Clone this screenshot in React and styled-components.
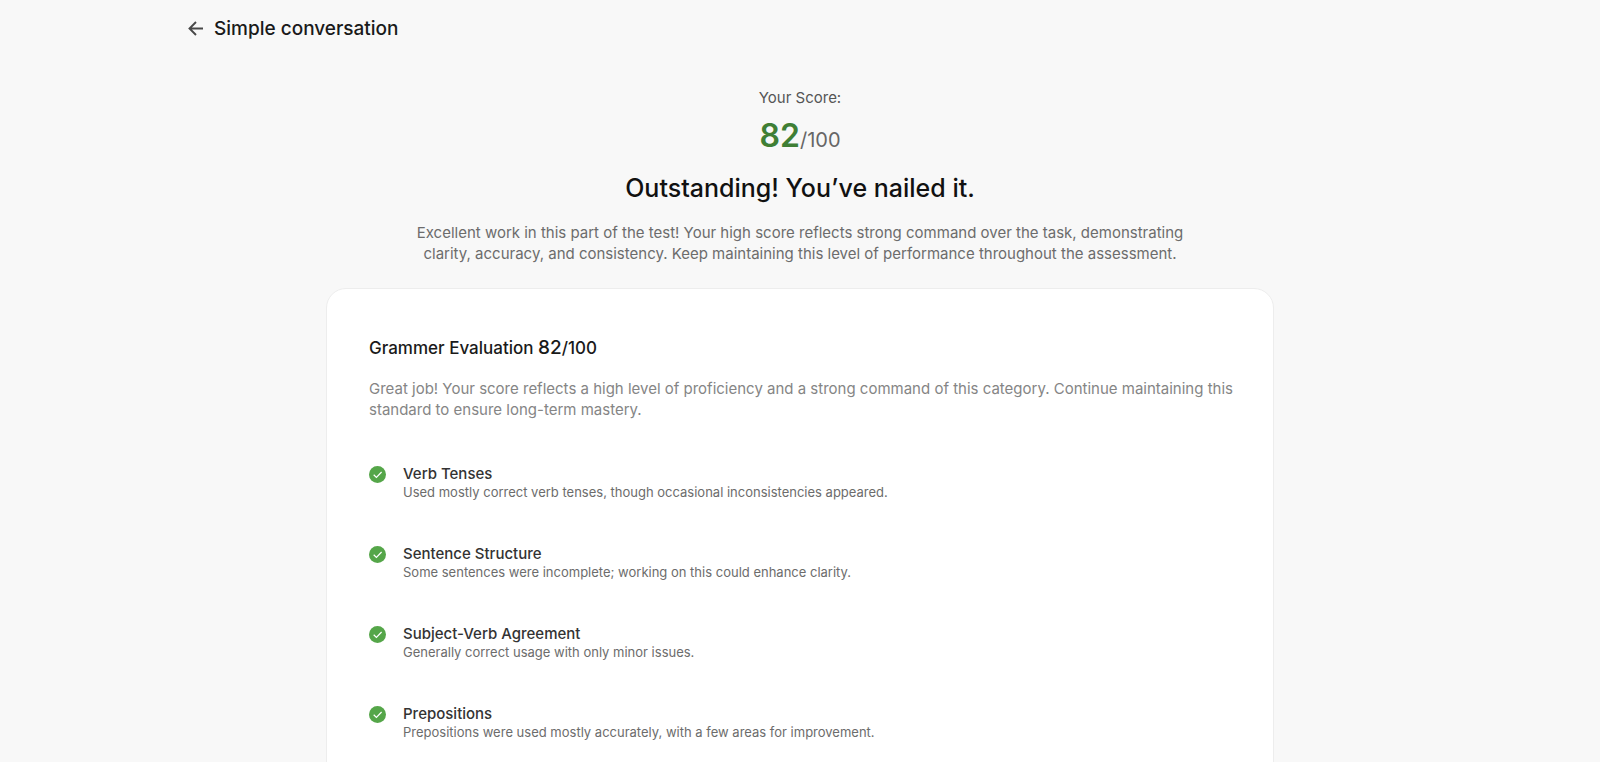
import React from 'react'
import styled, { createGlobalStyle } from 'styled-components'

const GlobalStyle = createGlobalStyle`
  * {
    box-sizing: border-box;
  }
  body {
    margin: 0;
    background-color: #F8F8F8;
    font-family: Inter, sans-serif;
    color: #1A1A1A;
  }
  h1, h2, h3, p, ul {
    margin: 0;
    padding: 0;
  }
`

const Page = styled.div`
  min-height: 100vh;
`

const Header = styled.header`
  display: flex;
  align-items: center;
  gap: 6px;
  max-width: 1232px;
  margin: 0 auto;
  padding: 16px 0;
`

const BackButton = styled.button`
  display: flex;
  padding: 2px;
  border: none;
  background: none;
  color: #484848;
  cursor: pointer;
`

const PageTitle = styled.h1`
  font-size: 19px;
  font-weight: 500;
  line-height: 26px;
`

const Container = styled.main`
  max-width: 948px;
  margin: 0 auto;
`

const Summary = styled.section`
  max-width: 780px;
  margin: 0 auto;
  padding: 30px 0 24px;
  text-align: center;
`

const ScoreLabel = styled.p`
  font-size: 15px;
  line-height: 20px;
  color: #555;
`

const Score = styled.p`
  margin-top: 9px;
  font-size: 20px;
  line-height: 38px;
  color: #666;
  span {
    font-size: 32px;
    font-weight: 600;
    color: #3F7F35;
  }
`

const Headline = styled.h2`
  margin-top: 12px;
  font-size: 25px;
  font-weight: 500;
  line-height: 34px;
  color: #111;
`

const SummaryText = styled.p`
  margin-top: 17px;
  font-size: 15px;
  line-height: 21px;
  color: #6C6C6C;
`

const Card = styled.section`
  padding: 45px 24px 45px 42px;
  border: 1px solid #EDEDED;
  border-radius: 20px;
  background-color: #FFF;
`

const CardTitle = styled.h3`
  font-size: 17px;
  font-weight: 500;
  line-height: 28px;
  span {
    font-size: 19px;
  }
`

const CardText = styled.p`
  margin-top: 16px;
  font-size: 15px;
  line-height: 21px;
  color: #858585;
`

const List = styled.ul`
  display: flex;
  flex-direction: column;
  gap: 44px;
  margin-top: 44px;
  list-style: none;
`

const Item = styled.li`
  display: flex;
  align-items: flex-start;
  gap: 17px;
  svg {
    flex: none;
    margin-top: 2px;
  }
`

const ItemTitle = styled.p`
  font-size: 15px;
  font-weight: 500;
  line-height: 20px;
  color: #333;
`

const ItemText = styled.p`
  font-size: 13px;
  line-height: 16px;
  color: #6C6C6C;
`

const items = [
	{ title: 'Verb Tenses', text: 'Used mostly correct verb tenses, though occasional inconsistencies appeared.' },
	{ title: 'Sentence Structure', text: 'Some sentences were incomplete; working on this could enhance clarity.' },
	{ title: 'Subject-Verb Agreement', text: 'Generally correct usage with only minor issues.' },
	{ title: 'Prepositions', text: 'Prepositions were used mostly accurately, with a few areas for improvement.' },
]

const ArrowIcon = () => (
	<svg width="20" height="20" viewBox="0 0 20 20" fill="none" stroke="currentColor" strokeWidth="1.9">
		<path d="M17 9.5H3.5M10 3L3.5 9.5L10 16" />
	</svg>
)

const CheckIcon = () => (
	<svg width="17" height="17" viewBox="0 0 17 17" fill="none">
		<circle cx="8.5" cy="8.5" r="8.5" fill="#55A649" />
		<path d="M4.7 8.8L7.4 11.4L12.6 6" stroke="#FFF" strokeWidth="1.2" />
	</svg>
)

const App = () => (
	<Page>
		<GlobalStyle />
		<Header>
			<BackButton type="button" aria-label="Back"><ArrowIcon /></BackButton>
			<PageTitle>Simple conversation</PageTitle>
		</Header>
		<Container>
			<Summary>
				<ScoreLabel>Your Score:</ScoreLabel>
				<Score><span>82</span>/100</Score>
				<Headline>Outstanding! You’ve nailed it.</Headline>
				<SummaryText>Excellent work in this part of the test! Your high score reflects strong command over the task, demonstrating clarity, accuracy, and consistency. Keep maintaining this level of performance throughout the assessment.</SummaryText>
			</Summary>
			<Card>
				<CardTitle>Grammer Evaluation <span>82</span>/100</CardTitle>
				<CardText>Great job! Your score reflects a high level of proficiency and a strong command of this category. Continue maintaining this standard to ensure long-term mastery.</CardText>
				<List>
					{items.map((item) => (
						<Item key={item.title}>
							<CheckIcon />
							<div>
								<ItemTitle>{item.title}</ItemTitle>
								<ItemText>{item.text}</ItemText>
							</div>
						</Item>
					))}
				</List>
			</Card>
		</Container>
	</Page>
)

export default App
